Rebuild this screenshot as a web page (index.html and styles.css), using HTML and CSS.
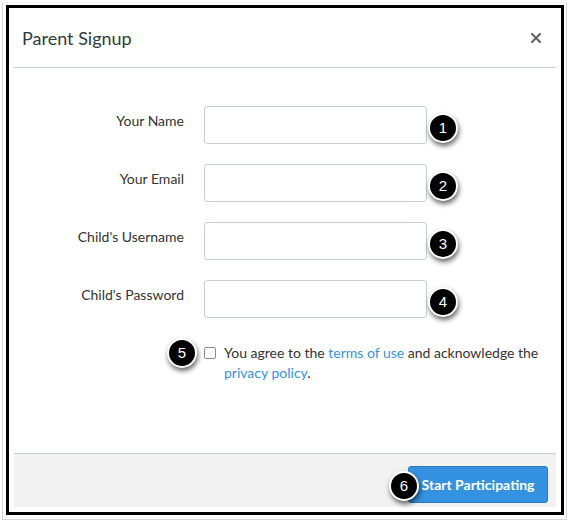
FILE: index.html
```html
<!DOCTYPE html>
<html lang="en">
<head>
<meta charset="utf-8">
<title>Parent Signup</title>
<link rel="stylesheet" href="styles.css">
</head>
<body>
<div class="page">
  <div class="frame">
    <div class="outline">
      <div class="dialog">
        <div class="dialog-header">
          <h1 class="title">Parent Signup</h1>
          <button class="close" type="button" aria-label="Close">
            <svg width="10" height="10" viewBox="0 0 10 10"><path d="M1 1L9 9M9 1L1 9" stroke="#666" stroke-width="2.2" stroke-linecap="square"/></svg>
          </button>
        </div>
        <div class="dialog-body">
          <form class="form">
            <div class="row">
              <label class="label">Your Name</label>
              <div class="field"><input class="input" type="text"><span class="badge badge-field">1</span></div>
            </div>
            <div class="row">
              <label class="label">Your Email</label>
              <div class="field"><input class="input" type="text"><span class="badge badge-field">2</span></div>
            </div>
            <div class="row">
              <label class="label">Child's Username</label>
              <div class="field"><input class="input" type="text"><span class="badge badge-field">3</span></div>
            </div>
            <div class="row">
              <label class="label">Child's Password</label>
              <div class="field"><input class="input" type="password"><span class="badge badge-field">4</span></div>
            </div>
            <div class="row agree">
              <div class="spacer"><span class="badge badge-check">5</span></div>
              <span class="check"></span>
              <p class="agree-text">You agree to the <a href="#" class="link">terms of use</a> and acknowledge the <a href="#" class="link">privacy policy</a>.</p>
            </div>
          </form>
        </div>
        <div class="dialog-footer">
          <div class="btn-wrap">
            <span class="badge badge-btn">6</span>
            <button class="btn" type="button">Start Participating</button>
          </div>
        </div>
      </div>
    </div>
  </div>
</div>
</body>
</html>
```
FILE: styles.css
```css
html, body {
  margin: 0;
  padding: 0;
  background: #ffffff;
}

body {
  font-family: Lato, "Liberation Sans", sans-serif;
  color: #2d3b45;
}

.page {
  padding: 2px 2px 3px 2px;
  width: 569px;
  height: 523px;
  box-sizing: border-box;
}

.frame {
  border: 1px solid #d6d6d6;
  border-top-color: #f2f2f2;
  padding: 2px 2px 4px 3px;
}

.outline {
  border: 3px solid #000000;
  padding: 0 5px 5px 5px;
}

.dialog {
  height: 499px;
  display: flex;
  flex-direction: column;
  background: #ffffff;
}

.dialog-header {
  display: flex;
  justify-content: space-between;
  align-items: center;
  padding: 18px 15px 17px 8px;
  border-bottom: 1px solid #c7cdd1;
}

.title {
  margin: 0;
  font-size: 18px;
  font-weight: 400;
  line-height: 24px;
  color: #2d3b45;
}

.close {
  border: 0;
  background: none;
  padding: 0;
  width: 10px;
  height: 10px;
  display: flex;
}

.dialog-body {
  flex: 1;
}

.form {
  padding-top: 38px;
  display: flex;
  flex-direction: column;
  gap: 20px;
}

.row {
  display: flex;
  gap: 20px;
}

.label {
  width: 170px;
  text-align: right;
  font-size: 14px;
  line-height: 20px;
  padding-top: 5px;
  color: #333333;
}

.field {
  position: relative;
  width: 223px;
  height: 38px;
}

.input {
  width: 100%;
  height: 100%;
  box-sizing: border-box;
  border: 1px solid #c7cdd1;
  border-radius: 3px;
  margin: 0;
  background: #fff;
}

.badge {
  position: absolute;
  width: 26px;
  height: 26px;
  border: 2px solid #ffffff;
  border-radius: 50%;
  background: #000000;
  color: #ffffff;
  font-family: "Liberation Sans", Arial, sans-serif;
  font-size: 15px;
  line-height: 26px;
  text-align: center;
  box-shadow: 1px 3px 5px rgba(0, 0, 0, 0.6);
}

.badge-field {
  left: calc(100% + 1px);
  top: 7px;
}

.agree {
  margin-top: 5px;
  gap: 0;
}

.spacer {
  position: relative;
  width: 190px;
  flex: none;
}

.badge-check {
  left: 153px;
  top: -5px;
}

.check {
  flex: none;
  width: 10px;
  height: 10px;
  margin-top: 4px;
  margin-right: 8px;
  border: 1px solid #8a8a8a;
  border-radius: 2px;
  background: #fff;
}

.agree-text {
  margin: 0;
  width: 322px;
  font-size: 14px;
  line-height: 20px;
  color: #333333;
}

.link {
  color: #3592e0;
  text-decoration: none;
}

.dialog-footer {
  display: flex;
  justify-content: flex-end;
  padding: 12px 8px 4px;
  background: #f2f2f2;
  border-top: 1px solid #c7cdd1;
}

.btn-wrap {
  position: relative;
}

.badge-btn {
  left: -19px;
  top: 5px;
  z-index: 1;
}

.btn {
  width: 140px;
  height: 37px;
  border: 1px solid #2a79c2;
  border-radius: 3px;
  background: #3592e0;
  color: #ffffff;
  font-family: Lato, "Liberation Sans", sans-serif;
  font-weight: 700;
  font-size: 14px;
  padding: 0;
}
```
